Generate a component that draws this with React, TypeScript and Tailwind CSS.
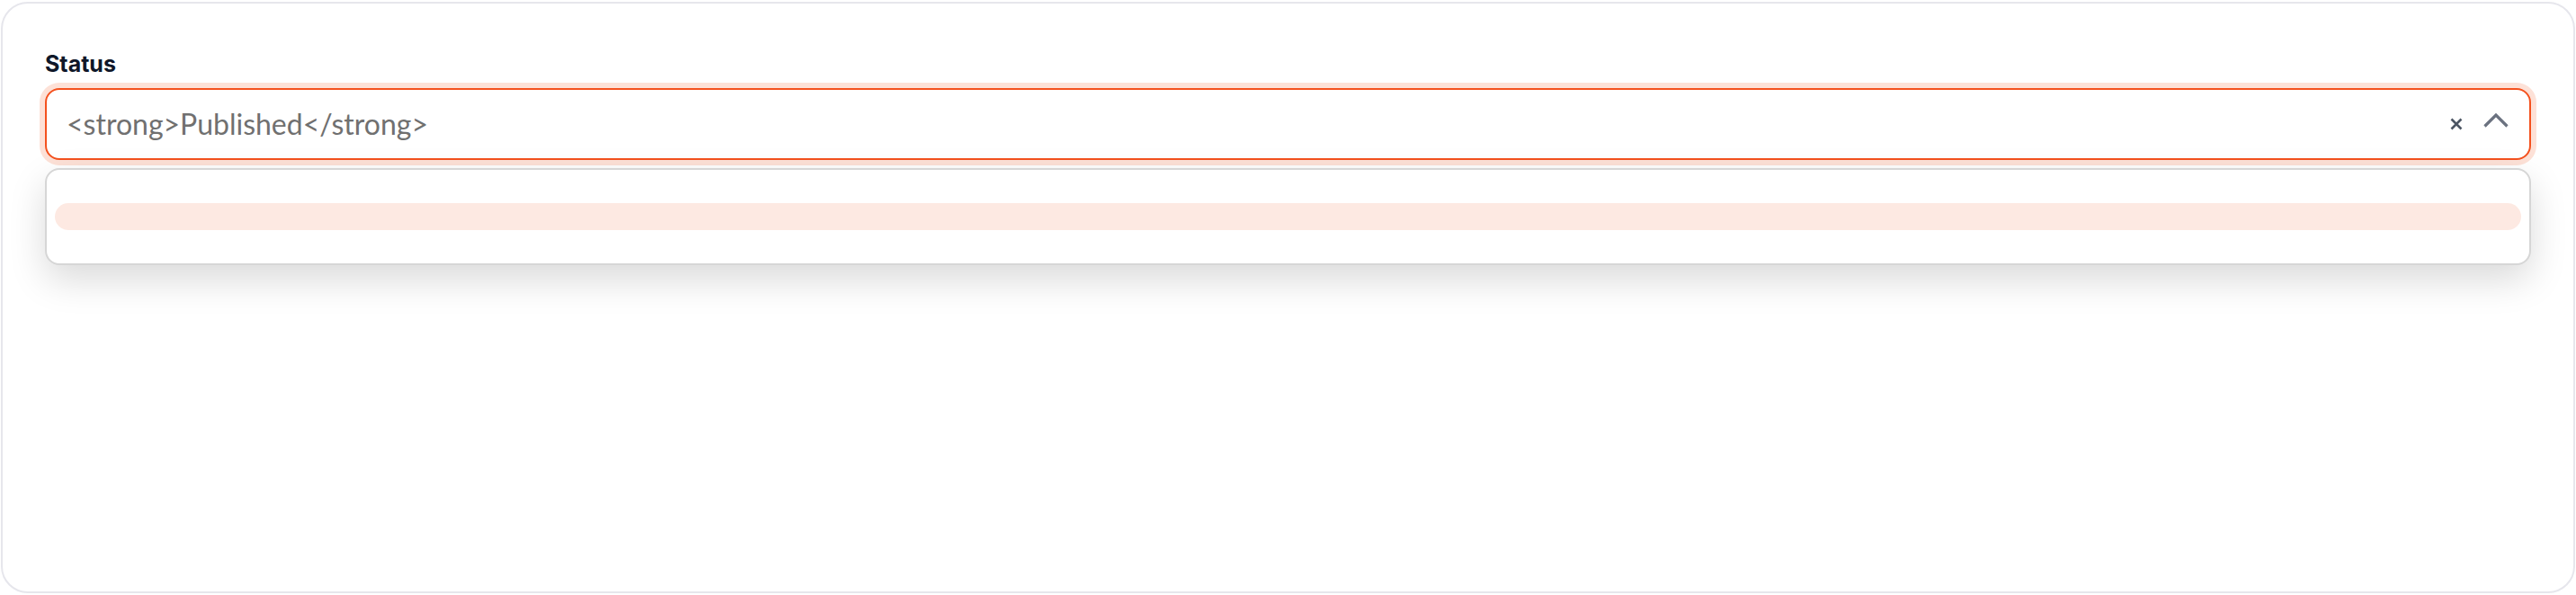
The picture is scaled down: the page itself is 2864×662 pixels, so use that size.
import React from 'react';

function ClearIcon() {
  return (
    <svg width="16" height="16" viewBox="0 0 16 16" className="shrink-0 text-[#4b5563]">
      <path d="M2.5 2.5 13.5 13.5 M13.5 2.5 2.5 13.5" stroke="currentColor" strokeWidth="2.6" fill="none" />
    </svg>
  );
}

function ChevronUpIcon() {
  return (
    <svg width="28" height="18" viewBox="0 0 28 18" className="shrink-0 mb-[8px] text-[#6b7280]">
      <polyline points="1.5,15.5 14,3 26.5,15.5" stroke="currentColor" strokeWidth="3.2" fill="none" />
    </svg>
  );
}

export default function App() {
  return (
    <div className="w-[2864px] h-[662px] bg-white pt-[2px] px-px" style={{ fontFamily: 'Lato, "Noto Sans", sans-serif' }}>
      <div className="h-[658px] rounded-[30px] border-2 border-[#e6e6ec] bg-white px-[47px] pt-[51px]">
        <label
          className="block text-[25px] leading-[32px] font-bold text-[#0f1729] mb-[11px]"
          style={{ fontFamily: 'Inter, Lato, sans-serif' }}
        >
          Status
        </label>

        <div className="relative">
          {/* Select control */}
          <div className="h-[80px] flex items-center rounded-[16px] border-2 border-[#f4511e] ring-[6px] ring-[#fde1d7] bg-white pl-[22px] pr-[23px]">
            <span className="flex-1 text-[32px] text-[#707070] truncate">&lt;strong&gt;Published&lt;/strong&gt;</span>
            <div className="flex items-center gap-[22px]">
              <ClearIcon />
              <ChevronUpIcon />
            </div>
          </div>

          {/* Open menu */}
          <div className="absolute left-0 right-0 top-[calc(100%+9px)] rounded-[16px] border-2 border-[#d6d6d6] bg-white px-[9px] py-[37px] shadow-[0_16px_40px_rgba(0,0,0,0.15)]">
            <div className="h-[30px] rounded-full bg-[#fde9e2]" />
          </div>
        </div>
      </div>
    </div>
  );
}
